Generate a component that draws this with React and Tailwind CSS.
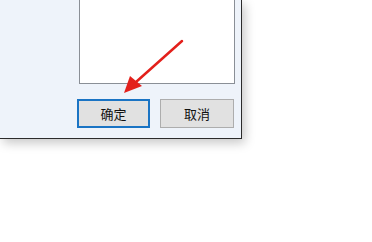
import React from 'react';

const cjk = { fontFamily: '"Microsoft YaHei", "Noto Sans CJK SC", sans-serif' };

export default function App() {
  return (
    <div className="relative w-[372px] h-[242px] bg-white overflow-hidden" style={cjk}>
      <div className="w-[242px] h-[139px] bg-[#eef3fa] border-r border-b border-[#2b2b2b] shadow-[3px_4px_10px_rgba(0,0,0,0.22)]">
        <div className="ml-[79px] w-[156px] h-[84px] bg-white border border-t-0 border-[#8a8f96]" />
        <div className="flex gap-[10px] ml-[77px] mt-[15px]">
          <button className="w-[73px] h-[29px] bg-[#e1e1e1] border-2 border-[#1a74c4] text-[13px] text-[#111] flex items-center justify-center">
            确定
          </button>
          <button className="w-[74px] h-[29px] bg-[#e1e1e1] border border-[#adadad] text-[13px] text-[#111] flex items-center justify-center">
            取消
          </button>
        </div>
      </div>
      <svg className="absolute left-0 top-0" width="372" height="242" viewBox="0 0 372 242">
        <line x1="182" y1="41" x2="136" y2="82" stroke="#e3201b" strokeWidth="2.5" strokeLinecap="round" />
        <polygon points="124,93 130,76 142,86" fill="#e3201b" />
      </svg>
    </div>
  );
}
